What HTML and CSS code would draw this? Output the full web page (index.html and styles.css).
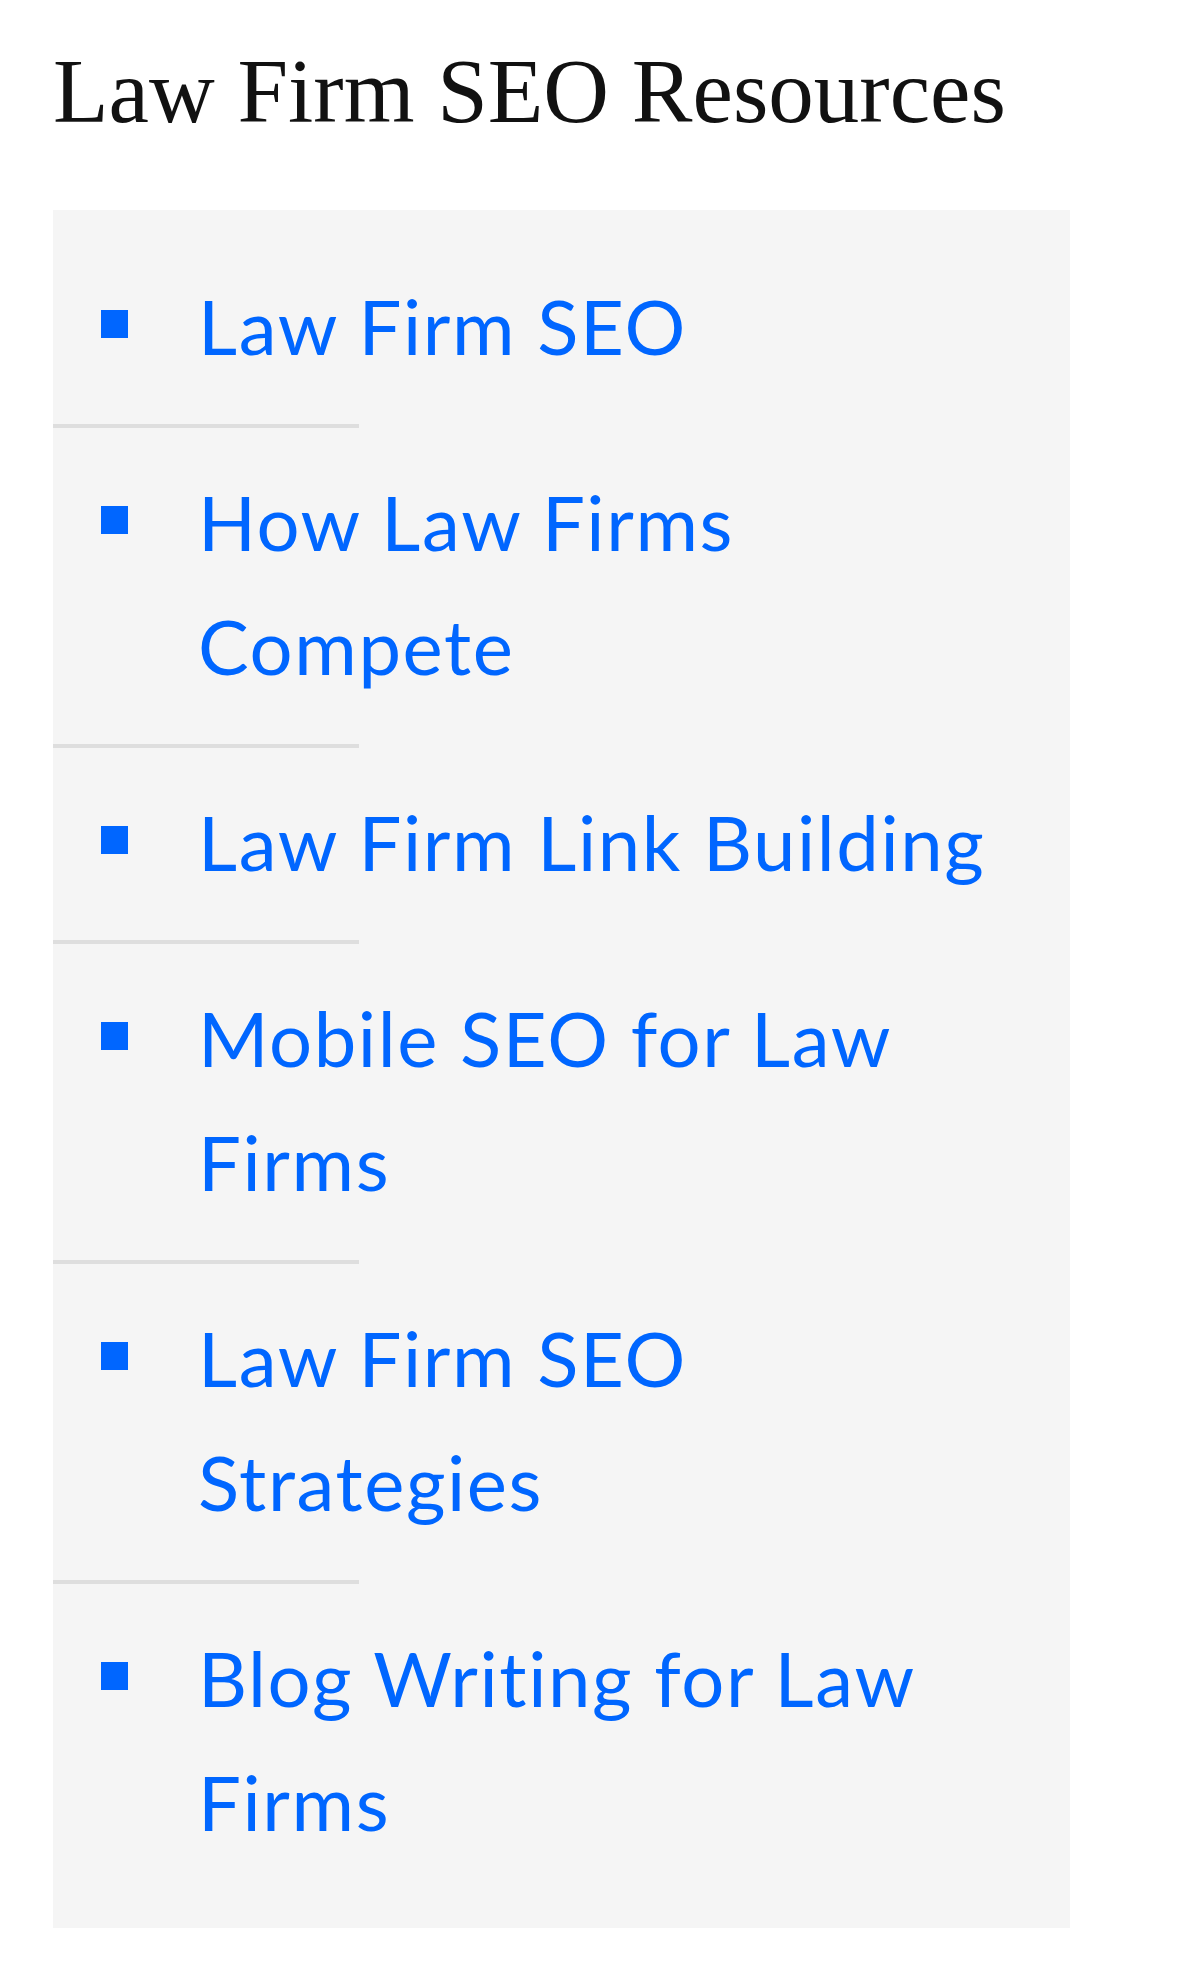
FILE: index.html
```html
<!DOCTYPE html>
<html lang="en">
<head>
    <meta charset="UTF-8">
    <meta name="viewport" content="width=device-width, initial-scale=1.0">
    <title>Law Firm SEO Resources</title>
    <link rel="stylesheet" href="styles.css">
</head>
<body>
<aside class="widget">
    <h2 class="widget-title">Law Firm SEO Resources</h2>

    <!-- Resource links -->
    <ul class="resource-list">
        <li class="resource"><a class="resource-link" href="#"><span>Law Firm SEO</span></a></li>
        <li class="resource"><a class="resource-link" href="#"><span>How Law Firms Compete</span></a></li>
        <li class="resource"><a class="resource-link" href="#"><span>Law Firm Link Building</span></a></li>
        <li class="resource"><a class="resource-link" href="#"><span>Mobile SEO for Law Firms</span></a></li>
        <li class="resource"><a class="resource-link" href="#"><span>Law Firm SEO Strategies</span></a></li>
        <li class="resource"><a class="resource-link" href="#"><span>Blog Writing for Law Firms</span></a></li>
    </ul>
</aside>
</body>
</html>
```

FILE: styles.css
```css
* {
    box-sizing: border-box;
    margin: 0;
    padding: 0;
}

body {
    background-color: #fff;
    color: #111;
    font-family: 'Liberation Serif', serif;
}

.widget {
    width: 1017px;
    margin-left: 53px;
    padding-top: 37px;
}

.widget-title {
    font-family: 'Liberation Serif', serif;
    font-weight: normal;
    font-size: 91px;
    line-height: 1.2;
    color: #111;
    margin-bottom: 64px;
}

/* grey box */
.resource-list {
    list-style: none;
    background-color: #f5f5f5;
    padding: 22px 0 28px;
}

.resource::after {
    content: '';
    display: block;
    width: 306px;
    height: 4px;
    background-color: #dedede;
}

.resource:last-child::after {
    display: none;
}

.resource-link {
    display: flex;
    align-items: flex-start;
    gap: 70px;
    padding: 32px 0 36px 48px;
    font-family: 'Lato', sans-serif;
    font-size: 76px;
    line-height: 124px;
    letter-spacing: 1.6px;
    color: #0066ff;
    text-decoration: none;
}

.resource-link::before {
    content: '';
    flex: none;
    width: 27px;
    height: 28px;
    margin-top: 46px;
    background-color: #0066ff;
}

.resource-link span {
    max-width: 820px;
}
```
